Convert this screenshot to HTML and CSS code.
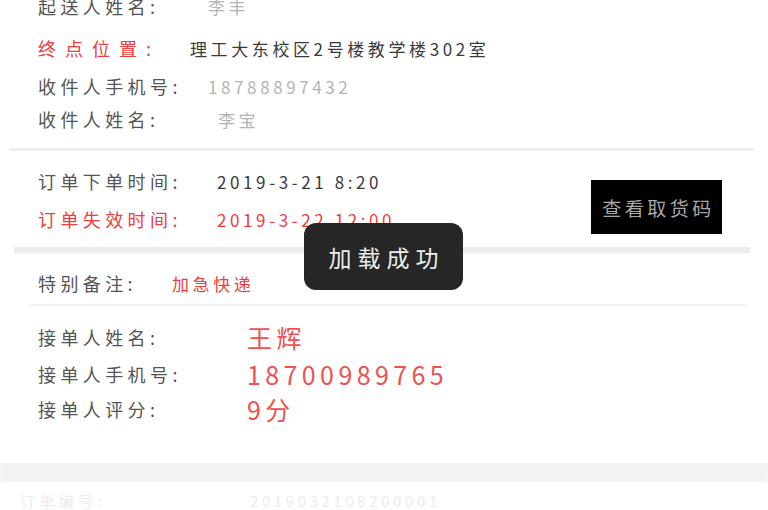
FILE: index.html
```html
<!DOCTYPE html>
<html lang="zh-CN">
<head>
<meta charset="utf-8">
<title>订单详情</title>
<link rel="stylesheet" href="styles.css">
</head>
<body>
<div class="page">
  <section class="sec sec-addr">
    <div class="row">
      <span class="lbl w170">起送人姓名:</span>
      <span class="val light">李丰</span>
      <span class="status">已接单</span>
    </div>
    <div class="row">
      <span class="lbl red wide w152">终点位置:</span>
      <span class="val">理工大东校区2号楼教学楼302室</span>
    </div>
    <div class="row">
      <span class="lbl w170">收件人手机号:</span>
      <span class="val light">18788897432</span>
    </div>
    <div class="row">
      <span class="lbl w180">收件人姓名:</span>
      <span class="val light">李宝</span>
    </div>
  </section>
  <div class="line line-a"></div>
  <section class="sec sec-time">
    <div class="col">
      <div class="row">
        <span class="lbl w179">订单下单时间:</span>
        <span class="val">2019-3-21 8:20</span>
      </div>
      <div class="row">
        <span class="lbl red w179">订单失效时间:</span>
        <span class="val red">2019-3-22 12:00</span>
      </div>
    </div>
    <button class="code-btn" type="button">查看取货码</button>
  </section>
  <div class="line line-b"></div>
  <section class="sec sec-note">
    <div class="row">
      <span class="lbl w134">特别备注:</span>
      <span class="val red">加急快递</span>
    </div>
  </section>
  <div class="line line-c"></div>
  <section class="sec sec-taker">
    <div class="row big">
      <span class="lbl w209">接单人姓名:</span>
      <span class="val red large">王辉</span>
    </div>
    <div class="row big">
      <span class="lbl w209">接单人手机号:</span>
      <span class="val red large">18700989765</span>
    </div>
    <div class="row big">
      <span class="lbl w209">接单人评分:</span>
      <span class="val red large">9分</span>
    </div>
  </section>
  <div class="band"></div>
  <section class="sec sec-next">
    <div class="row faint">
      <span class="lbl w230">订单编号:</span>
      <span class="val">2019032108200001</span>
    </div>
  </section>
</div>
<div class="toast">加载成功</div>
</body>
</html>
```

FILE: styles.css
```css
html, body {
  margin: 0;
  padding: 0;
  background: #ffffff;
  overflow: hidden;
}

body {
  width: 768px;
  height: 510px;
  position: relative;
  font-family: "Noto Sans CJK SC", "Noto Sans", sans-serif;
  color: #4a4a4a;
}

.page {
  margin-top: -10px;
}

.sec {
  padding-left: 38px;
  padding-right: 46px;
}

.row {
  display: flex;
  align-items: center;
  height: 32px;
  font-size: 18px;
}

.lbl {
  flex: none;
  letter-spacing: 4.4px;
  color: #555555;
  white-space: nowrap;
}

.lbl.wide {
  letter-spacing: 9px;
}

.w134 { width: 134px; }
.w152 { width: 152px; }
.w170 { width: 170px; }
.w179 { width: 179px; }
.w180 { width: 180px; }
.w209 { width: 209px; }
.w230 { width: 230px; }

.val {
  font-size: 17px;
  letter-spacing: 3.6px;
  color: #3a3a3a;
  white-space: nowrap;
}

.light {
  color: #b4b4b4;
}

.red,
.lbl.red {
  color: #ee3d3d;
}

.large {
  font-size: 25px;
  letter-spacing: 4.4px;
  color: #ef5050;
}

.status {
  margin-left: auto;
  margin-right: 52px;
  align-self: flex-start;
  margin-top: -12px;
  line-height: 20px;
  font-size: 18px;
  letter-spacing: 10px;
  color: #7fe08c;
}

/* section 1 rows */
.sec-addr .row:nth-child(2) { margin-top: 10px; }
.sec-addr .row:nth-child(3) { margin-top: 6px; }
.sec-addr .row:nth-child(4) { margin-top: 1px; }
.sec-addr { padding-bottom: 13px; }

.line {
  background: #efefef;
}

.line-a {
  height: 3px;
  margin: 0 14px 0 10px;
}

.sec-time {
  display: flex;
  align-items: flex-start;
  justify-content: space-between;
  padding-top: 14px;
  padding-bottom: 12px;
}

.sec-time .row + .row {
  margin-top: 6px;
}

.code-btn {
  margin-top: 15px;
  width: 131px;
  height: 54px;
  border: none;
  background: #000000;
  color: #a8a8a8;
  font-family: inherit;
  font-size: 19px;
  letter-spacing: 3.5px;
  padding: 0 0 0 4px;
}

.line-b {
  height: 6px;
  margin: 0 18px 0 14px;
  background: #ececec;
}

.sec-note {
  padding-top: 14px;
  padding-bottom: 5px;
}

.line-c {
  height: 2px;
  margin: 0 22px 0 30px;
  background: #f0f0f0;
}

.sec-taker {
  padding-top: 14px;
  padding-bottom: 37px;
}

.row.big {
  height: 34px;
}

.sec-taker .row:nth-child(2) { margin-top: 3px; }
.sec-taker .row:nth-child(3) { margin-top: 1px; }

.band {
  height: 19px;
  background: #f1f1f1;
  box-shadow: inset 0 0 6px #f8f8f8;
}

.sec-next {
  padding-left: 20px;
  padding-top: 2px;
}

.row.faint .lbl,
.row.faint .val {
  color: #ececec;
  font-size: 15px;
}

.toast {
  position: absolute;
  left: 304px;
  top: 223px;
  width: 159px;
  height: 67px;
  border-radius: 12px;
  background: #262626;
  color: #ededed;
  font-size: 23px;
  letter-spacing: 6px;
  display: flex;
  align-items: center;
  justify-content: center;
  padding-left: 6px;
  box-sizing: border-box;
}
```
